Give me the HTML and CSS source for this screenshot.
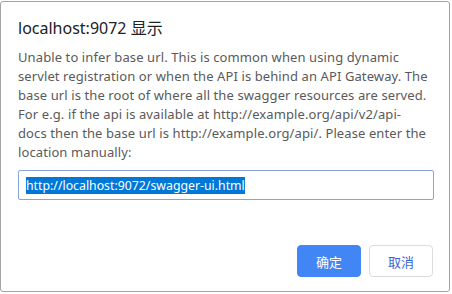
FILE: index.html
```html
<!DOCTYPE html>
<html>
<head>
<meta charset="utf-8">
<link rel="stylesheet" href="styles.css">
</head>
<body>
<div class="dialog">
  <div class="title">localhost:9072 显示</div>
  <div class="message">
    <span class="line">Unable to infer base url. This is common when using dynamic</span>
    <span class="line">servlet registration or when the API is behind an API Gateway. The</span>
    <span class="line">base url is the root of where all the swagger resources are served.</span>
    <span class="line">For e.g. if the api is available at http://example.org/api/v2/api-</span>
    <span class="line">docs then the base url is http://example.org/api/. Please enter the</span>
    <span class="line">location manually:</span>
  </div>
  <div class="field"><span class="selected">http://localhost:9072/swagger-ui.html</span></div>
  <div class="actions">
    <button class="btn btn-primary">确定</button>
    <button class="btn btn-secondary">取消</button>
  </div>
</div>
</body>
</html>
```
FILE: styles.css
```css
html, body {
  margin: 0;
  padding: 0;
  background: #ffffff;
}
body {
  font-family: "Noto Sans", "Noto Sans CJK SC", sans-serif;
}
.dialog {
  box-sizing: border-box;
  width: 450px;
  height: 291px;
  margin-top: 1px;
  border: 1px solid #a3a3a3;
  border-radius: 3px;
  padding: 16px 15px 14px 17px;
  display: flex;
  flex-direction: column;
  background: #fff;
}
.title {
  font-size: 16px;
  line-height: 20px;
  color: #202124;
  white-space: nowrap;
}
.message {
  margin-top: 10px;
  font-size: 13px;
  line-height: 19px;
  letter-spacing: 0.1px;
  color: #5a5a5a;
  display: flex;
  flex-direction: column;
}
.line {
  white-space: nowrap;
}
.field {
  box-sizing: border-box;
  margin-top: 8px;
  height: 30px;
  width: 416px;
  border: 1px solid #85a3dc;
  border-radius: 2px;
  padding: 0 7px;
  display: flex;
  align-items: center;
  font-size: 12.3px;
}
.selected {
  background: #0078d7;
  color: #ffffff;
  line-height: 17px;
  white-space: nowrap;
}
.actions {
  margin-top: auto;
  display: flex;
  justify-content: flex-end;
  gap: 8px;
  padding-right: 1px;
}
.btn {
  box-sizing: border-box;
  width: 64px;
  height: 32px;
  border-radius: 4px;
  font-family: "Noto Sans CJK SC", sans-serif;
  font-size: 13px;
  padding: 0;
  cursor: pointer;
}
.btn-primary {
  background: #4285f4;
  border: 1px solid #4285f4;
  color: #ffffff;
}
.btn-secondary {
  background: #ffffff;
  border: 1px solid #dadce0;
  color: #3367d6;
}
```
